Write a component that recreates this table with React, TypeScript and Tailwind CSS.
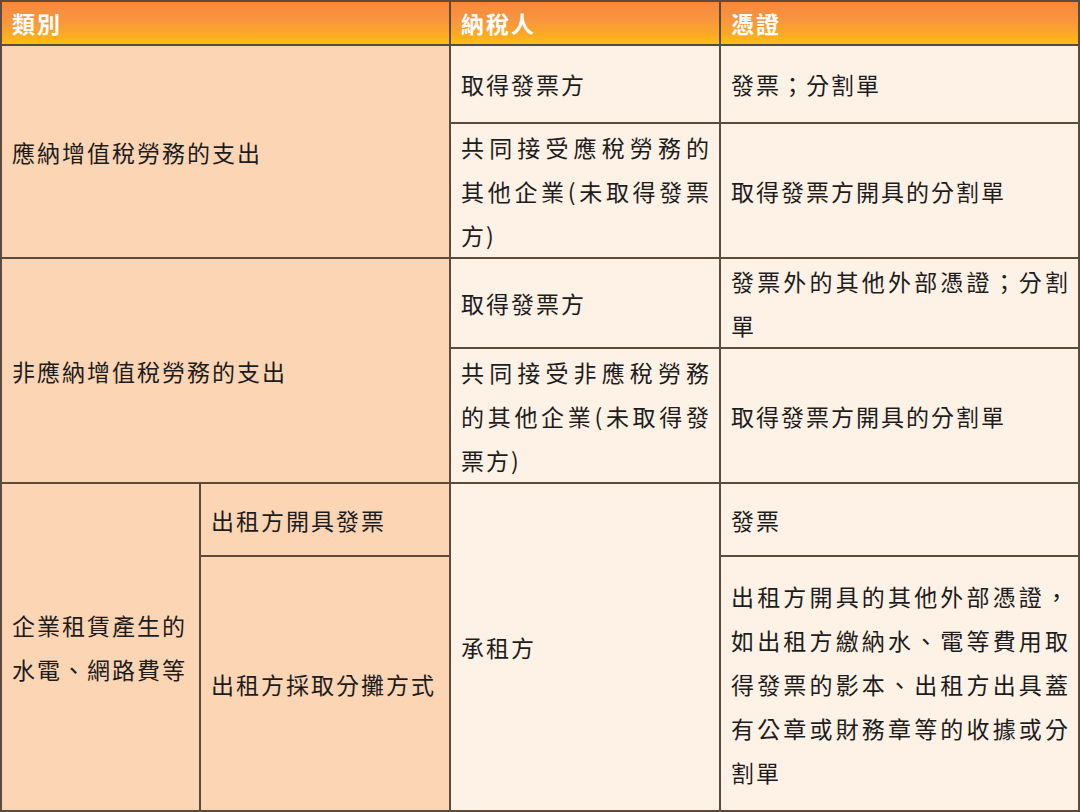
import React from "react";

const peach = "bg-[#fcd5b5]";
const light = "bg-[#fef1e6]";
const cellBase =
  "flex flex-col justify-center pl-[10px] pr-[10px] text-[23px] leading-[44px] tracking-[2px] text-[#1c1c1c]";
const head =
  "flex items-center pl-[10px] text-[23px] font-bold tracking-[2px] text-white bg-[linear-gradient(to_bottom,#f6883f_0%,#f8963d_45%,#fcab22_80%,#ffbe12_100%)]";

function J({ lines }: { lines: string[] }) {
  return (
    <>
      {lines.map((l, i) => (
        <div
          key={i}
          className={
            i < lines.length - 1
              ? "text-justify [text-align-last:justify] whitespace-nowrap"
              : "text-left whitespace-nowrap"
          }
        >
          {l}
        </div>
      ))}
    </>
  );
}

export default function App() {
  return (
    <div className="w-[1080px] h-[812px] font-['Noto_Sans_CJK_TC','Noto_Sans_CJK_SC',sans-serif]">
      <div className="grid w-[1080px] h-[812px] grid-cols-[197px_248px_268px_357px] grid-rows-[42px_76px_133px_88px_133px_71px_253px] gap-[2px] p-[2px] bg-[#5c4a3d]">
        {/* header */}
        <div className={`${head} col-start-1 col-span-2 row-start-1`}>類別</div>
        <div className={`${head} col-start-3 row-start-1`}>納稅人</div>
        <div className={`${head} col-start-4 row-start-1`}>憑證</div>

        {/* group 1 */}
        <div className={`${cellBase} ${peach} col-start-1 col-span-2 row-start-2 row-span-2`}>
          應納增值稅勞務的支出
        </div>
        <div className={`${cellBase} ${light} col-start-3 row-start-2`}>取得發票方</div>
        <div className={`${cellBase} ${light} col-start-4 row-start-2`}>發票；分割單</div>
        <div className={`${cellBase} ${light} col-start-3 row-start-3 !pr-[8px]`}>
          <J lines={["共同接受應稅勞務的", "其他企業(未取得發票", "方)"]} />
        </div>
        <div className={`${cellBase} ${light} col-start-4 row-start-3`}>
          取得發票方開具的分割單
        </div>

        {/* group 2 */}
        <div className={`${cellBase} ${peach} col-start-1 col-span-2 row-start-4 row-span-2`}>
          非應納增值稅勞務的支出
        </div>
        <div className={`${cellBase} ${light} col-start-3 row-start-4`}>取得發票方</div>
        <div className={`${cellBase} ${light} col-start-4 row-start-4 !pr-[8px]`}>
          <J lines={["發票外的其他外部憑證；分割", "單"]} />
        </div>
        <div className={`${cellBase} ${light} col-start-3 row-start-5 !pr-[8px]`}>
          <J lines={["共同接受非應稅勞務", "的其他企業(未取得發", "票方)"]} />
        </div>
        <div className={`${cellBase} ${light} col-start-4 row-start-5`}>
          取得發票方開具的分割單
        </div>

        {/* group 3 */}
        <div className={`${cellBase} ${peach} col-start-1 row-start-6 row-span-2`}>
          <div className="whitespace-nowrap">企業租賃產生的</div>
          <div className="whitespace-nowrap">水電、網路費等</div>
        </div>
        <div className={`${cellBase} ${peach} col-start-2 row-start-6`}>出租方開具發票</div>
        <div className={`${cellBase} ${light} col-start-3 row-start-6 row-span-2`}>承租方</div>
        <div className={`${cellBase} ${light} col-start-4 row-start-6`}>發票</div>
        <div className={`${cellBase} ${peach} col-start-2 row-start-7`}>出租方採取分攤方式</div>
        <div className={`${cellBase} ${light} col-start-4 row-start-7 !pr-[8px]`}>
          <J
            lines={[
              "出租方開具的其他外部憑證，",
              "如出租方繳納水、電等費用取",
              "得發票的影本、出租方出具蓋",
              "有公章或財務章等的收據或分",
              "割單",
            ]}
          />
        </div>
      </div>
    </div>
  );
}
